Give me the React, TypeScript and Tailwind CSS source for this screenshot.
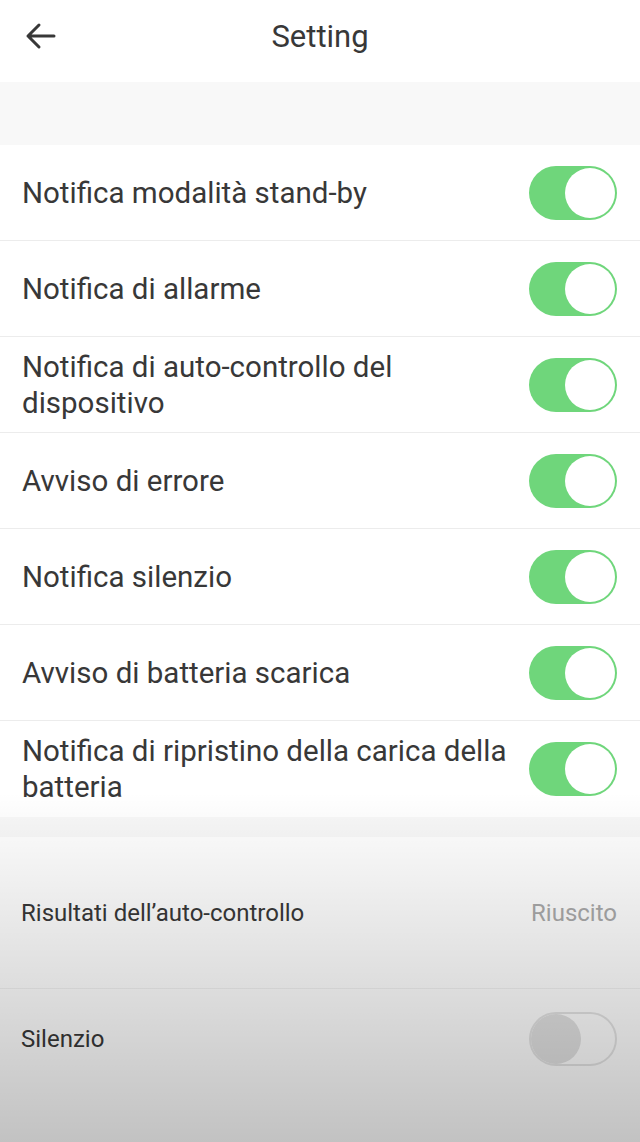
import { useState } from 'react';

const items = [
  'Notifica modalità stand-by',
  'Notifica di allarme',
  'Notifica di auto-controllo del dispositivo',
  'Avviso di errore',
  'Notifica silenzio',
  'Avviso di batteria scarica',
  'Notifica di ripristino della carica della batteria',
];

function Toggle({ on }: { on: boolean }) {
  if (on) {
    return (
      <div className="flex h-[54px] w-[88px] shrink-0 items-center justify-end rounded-full bg-[#6fd67b] p-[2px]">
        <div className="h-[50px] w-[50px] rounded-full bg-white" />
      </div>
    );
  }
  return (
    <div className="flex h-[54px] w-[88px] shrink-0 items-center justify-start rounded-full border-2 border-[#e4e4e4] bg-white">
      <div className="h-[50px] w-[50px] rounded-full bg-[#e2e2e2]" />
    </div>
  );
}

export default function App() {
  const [states] = useState(items.map(() => true));

  return (
    <div
      className="relative flex h-[1142px] w-[640px] flex-col overflow-hidden bg-[#f8f8f8] text-[#383838]"
      style={{ fontFamily: 'Roboto, "Noto Sans", sans-serif' }}
    >
      {/* header */}
      <div className="relative flex h-[82px] shrink-0 items-start justify-center bg-white pt-[19px]">
        <svg
          className="absolute left-[25px] top-[22px]"
          width="32"
          height="28"
          viewBox="0 0 32 28"
          fill="none"
          stroke="#383838"
          strokeWidth="3"
          strokeLinecap="round"
          strokeLinejoin="round"
        >
          <path d="M29 14H3M14 3L3 14l11 11" />
        </svg>
        <span className="text-[31px] leading-[36px]">Setting</span>
      </div>

      <div className="h-[63px] shrink-0" />

      {/* notification toggles */}
      <div className="shrink-0 bg-white">
        {items.map((label, i) => (
          <div
            key={label}
            className="flex h-[96px] items-center justify-between gap-4 border-b border-[#ececec] pl-[22px] pr-[23px] last:border-b-0"
          >
            <span className="text-[29.5px] leading-[36px]">{label}</span>
            <Toggle on={states[i]} />
          </div>
        ))}
      </div>

      <div className="h-[20px] shrink-0" />

      {/* self-check and silence */}
      <div className="flex flex-1 flex-col bg-white">
        <div className="flex h-[152px] items-center justify-between border-b border-[#f2f2f2] pl-[21px] pr-[23px]">
          <span className="text-[24px]">Risultati dell’auto-controllo</span>
          <span className="text-[24px] text-[#aaa]">Riuscito</span>
        </div>
        <div className="flex h-[100px] items-center justify-between pl-[21px] pr-[23px]">
          <span className="text-[24px]">Silenzio</span>
          <Toggle on={false} />
        </div>
      </div>

      {/* fade over the lower part */}
      <div className="pointer-events-none absolute inset-x-0 bottom-0 h-[350px] bg-gradient-to-b from-transparent to-[rgba(0,0,0,0.24)]" />
    </div>
  );
}
